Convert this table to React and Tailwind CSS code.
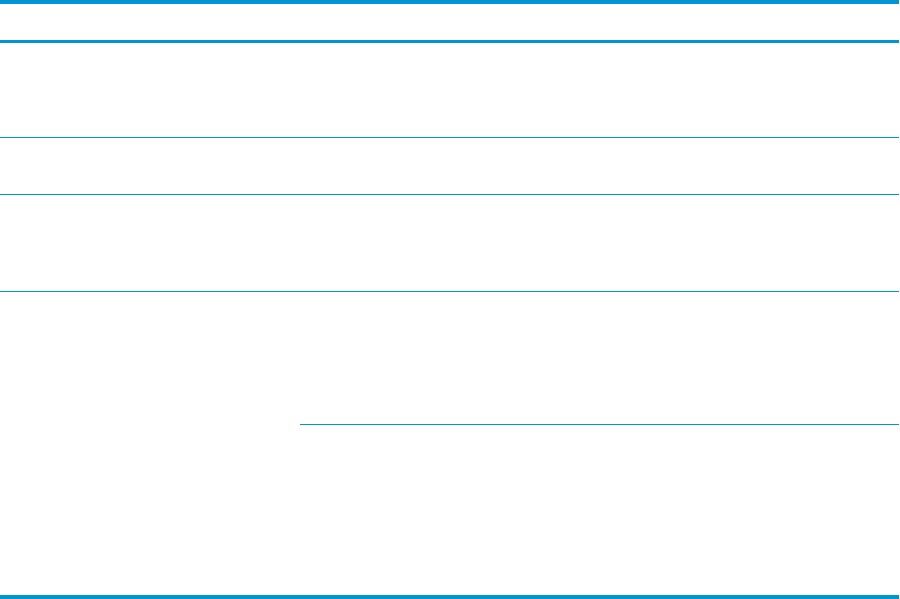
import React from 'react';

const rows = [
  { h: 'h-[94px]' },
  { h: 'h-[56px]' },
  { h: 'h-[96px]' },
];

export default function App() {
  return (
    <div className="w-[899px] bg-white font-['Liberation_Sans',sans-serif]">
      {/* cabecera */}
      <div className="h-[43px] border-t-[4px] border-b-[3px] border-[#0096d6]" />

      {rows.map((r, i) => (
        <div key={i} className={`${r.h} box-content border-b border-[#0096d6] flex`}>
          <div className="w-[300px]" />
          <div className="flex-1" />
        </div>
      ))}

      {/* última fila con celda dividida */}
      <div className="flex h-[307px] border-b-[4px] border-[#0096d6] box-border">
        <div className="w-[300px]" />
        <div className="flex-1 flex flex-col">
          <div className="h-[132px] border-b border-[#0096d6] box-content" />
          <div className="flex-1" />
        </div>
      </div>
    </div>
  );
}
